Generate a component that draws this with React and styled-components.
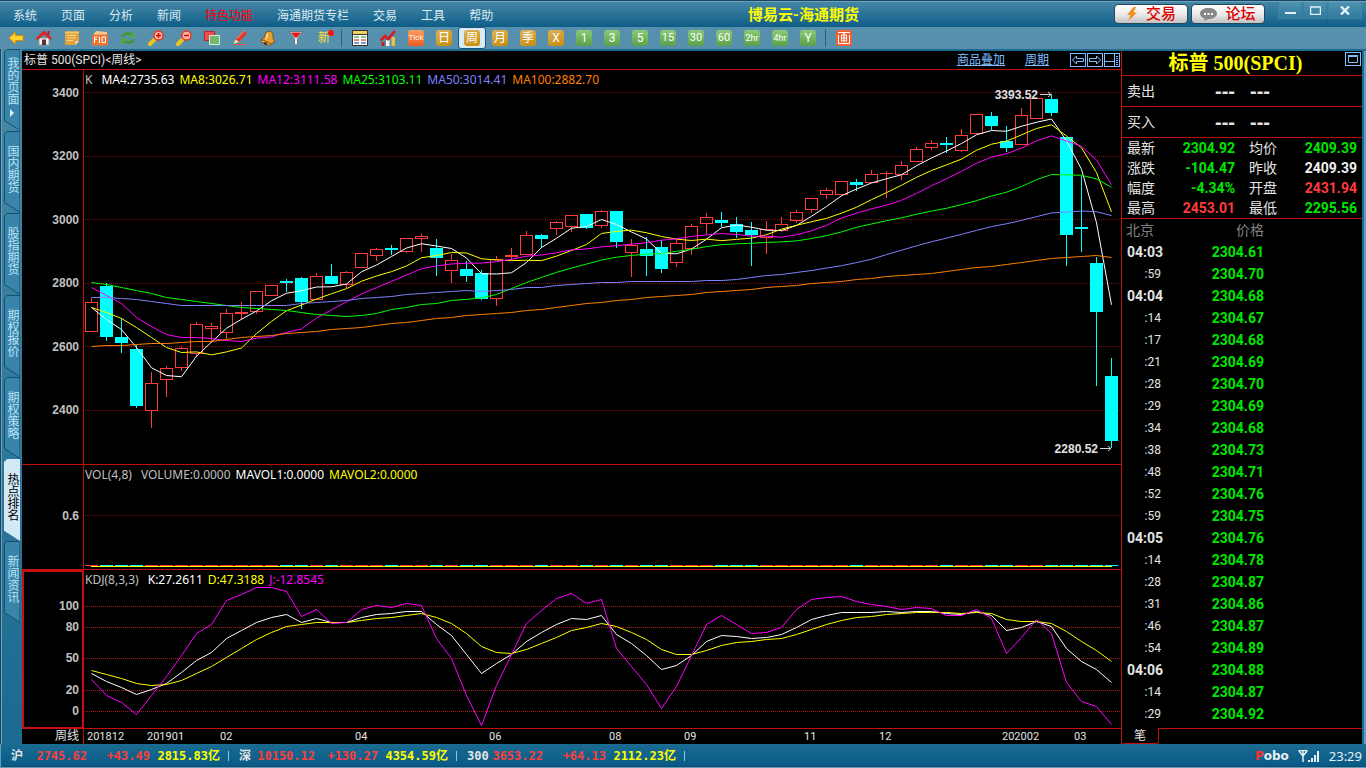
import React, { useState } from "react";
import styled, { createGlobalStyle, css } from "styled-components";

const GlobalStyle = createGlobalStyle`
  * {
    box-sizing: border-box;
  }
  body {
    margin: 0;
    background: #000;
    color: #e4e4e4;
    font: 12px/16px Roboto, "Noto Sans CJK SC", sans-serif;
  }
  button {
    padding: 0;
    border: none;
    background: none;
    color: inherit;
    font: inherit;
    cursor: pointer;
  }
  svg {
    display: block;
  }
`;

const RED = "#c01008";

/* ---------- data ---------- */

const menus = ["系统", "页面", "分析", "新闻", "特色功能", "海通期货专栏", "交易", "工具", "帮助"];

const sideTabs = ["我的页面", "国内期货", "股指期货", "期权报价", "期权策略", "热点排名", "新闻资讯"];

const periods = [
  ["Tick", "orange"],
  ["日", "gold"],
  ["周", "gold"],
  ["月", "gold"],
  ["季", "gold"],
  ["X", "gold"],
  ["1", "green"],
  ["3", "green"],
  ["5", "green"],
  ["15", "green"],
  ["30", "green"],
  ["60", "green"],
  ["2hr", "green"],
  ["4hr", "green"],
  ["Y", "green"],
];

// [high, body top, body bottom, low, rising]
const candles = [
  [298, 302, 332, 332, 1], [283, 286, 337, 341, 0], [318, 337, 343, 353, 0], [345, 349, 406, 408, 0],
  [372, 383, 411, 428, 1], [366, 368, 380, 397, 1], [347, 348, 368, 371, 1], [322, 324, 354, 357, 1],
  [323, 326, 329, 343, 1], [309, 313, 333, 339, 1], [302, 312, 314, 320, 1], [291, 291, 312, 314, 1],
  [285, 285, 296, 296, 1], [279, 281, 283, 292, 0], [277, 278, 302, 309, 0], [273, 276, 300, 300, 1],
  [264, 276, 284, 284, 0], [271, 272, 285, 288, 1], [253, 253, 268, 268, 1], [248, 249, 256, 261, 1],
  [245, 248, 250, 255, 0], [238, 238, 252, 253, 1], [234, 236, 239, 252, 1], [239, 248, 258, 276, 0],
  [254, 260, 271, 283, 1], [261, 269, 276, 282, 0], [270, 273, 299, 300, 0], [256, 259, 299, 306, 1],
  [248, 255, 257, 260, 1], [231, 235, 255, 255, 1], [234, 235, 239, 248, 0], [221, 222, 229, 235, 1],
  [215, 215, 227, 232, 1], [214, 214, 228, 229, 0], [210, 211, 226, 228, 1], [211, 211, 242, 248, 0],
  [239, 245, 253, 277, 1], [237, 249, 256, 276, 0], [240, 247, 269, 273, 0], [238, 243, 263, 267, 1],
  [224, 226, 249, 255, 1], [213, 217, 224, 234, 1], [212, 220, 223, 227, 0], [217, 224, 232, 238, 0],
  [222, 230, 235, 266, 0], [221, 229, 238, 254, 1], [217, 224, 231, 232, 1], [210, 212, 221, 223, 1],
  [198, 198, 210, 213, 1], [188, 190, 195, 199, 1], [181, 181, 195, 195, 1], [179, 182, 185, 191, 0],
  [170, 174, 183, 183, 1], [171, 173, 174, 198, 1], [161, 165, 175, 180, 1], [147, 149, 162, 162, 1],
  [140, 143, 148, 150, 1], [137, 143, 145, 153, 0], [129, 135, 151, 152, 1], [114, 114, 134, 134, 1],
  [112, 116, 126, 130, 0], [126, 141, 148, 152, 0], [108, 115, 145, 145, 1], [98, 98, 119, 119, 1],
  [94, 99, 113, 116, 0], [137, 137, 235, 266, 0], [176, 227, 229, 252, 0], [257, 263, 312, 386, 0],
  [358, 376, 441, 448, 0],
];

// values of each average before the window has enough bars of its own
const ma4Lead = [307, 319, 329];
const ma8Lead = [307, 312, 318, 327, 337, 347, 352];
const ma12Lead = [287, 295, 303, 317, 326, 334, 337, 337, 338, 340, 341];
const ma25Lead = [282, 284, 287, 290, 293, 297, 299, 301, 303, 305, 307, 308, 309, 310, 312, 314, 315, 316, 315, 313, 309, 307, 304, 303];
const ma50Lead = [
  297, 297, 298, 299, 301, 303, 305, 305, 305, 305, 305, 305, 305, 305, 303, 302, 301, 300, 298, 297, 296, 294, 293, 292, 291,
  290, 291, 290, 289, 287, 287, 285, 284, 283, 282, 282, 281, 281, 281, 281, 281, 280, 280, 279, 277, 275, 274, 272, 270,
];
const ma100 = [
  346, 345, 345, 344, 343, 343, 342, 341, 341, 339, 337, 336, 335, 333, 332, 331, 329, 328, 327, 325, 323, 322, 320, 318, 317,
  315, 314, 313, 312, 310, 309, 307, 305, 303, 302, 300, 299, 297, 296, 295, 294, 292, 291, 290, 289, 287, 286, 285, 283, 282,
  281, 279, 278, 276, 275, 274, 273, 271, 269, 267, 266, 264, 262, 260, 258, 257, 256, 255, 257,
];

const kdjK = [
  673, 681, 687, 694, 689, 683, 672, 660, 652, 638, 630, 622, 617, 614, 622, 618, 622, 622, 617, 614, 613, 611, 611, 624, 635,
  654, 673, 663, 654, 641, 632, 624, 618, 619, 615, 634, 643, 655, 669, 665, 655, 641, 635, 636, 638, 637, 634, 627, 619, 615,
  612, 612, 612, 611, 612, 611, 611, 613, 614, 611, 615, 630, 627, 621, 626, 648, 661, 669, 682,
];
const kdjD = [
  670, 674, 678, 683, 685, 684, 680, 673, 666, 657, 648, 639, 632, 626, 624, 622, 622, 622, 620, 618, 617, 615, 613, 617, 623,
  633, 646, 652, 653, 649, 643, 637, 630, 627, 623, 626, 632, 639, 649, 654, 654, 650, 645, 642, 641, 639, 638, 634, 629, 624,
  620, 617, 616, 614, 613, 612, 612, 612, 613, 612, 613, 619, 621, 621, 623, 631, 641, 650, 661,
];
const kdjJ = [
  679, 695, 702, 714, 695, 676, 655, 633, 624, 600, 594, 587, 587, 591, 616, 609, 623, 622, 609, 605, 607, 603, 605, 638, 658,
  695, 725, 685, 654, 623, 610, 598, 593, 603, 599, 648, 666, 684, 708, 686, 655, 624, 615, 624, 633, 632, 627, 609, 599, 597,
  596, 601, 604, 606, 609, 607, 608, 615, 615, 609, 618, 653, 637, 619, 633, 682, 701, 706, 724,
];

// label and the share of the axis up to the next one
const dates = [
  ["201812", 60], ["201901", 73], ["02", 135], ["04", 134], ["06", 120], ["08", 75],
  ["09", 120], ["11", 75], ["12", 123], ["202002", 72], ["03", 47],
];

const quotes = [
  ["最新", "2304.92", "down", "均价", "2409.39", "down"],
  ["涨跌", "-104.47", "down", "昨收", "2409.39", "flat"],
  ["幅度", "-4.34%", "down", "开盘", "2431.94", "up"],
  ["最高", "2453.01", "up", "最低", "2295.56", "down"],
];

const ticks = [
  ["04:03", "2304.61"], [":59", "2304.70"], ["04:04", "2304.68"], [":14", "2304.67"], [":17", "2304.68"],
  [":21", "2304.69"], [":28", "2304.70"], [":29", "2304.69"], [":34", "2304.68"], [":38", "2304.73"],
  [":48", "2304.71"], [":52", "2304.76"], [":59", "2304.75"], ["04:05", "2304.76"], [":14", "2304.78"],
  [":28", "2304.87"], [":31", "2304.86"], [":46", "2304.87"], [":54", "2304.89"], ["04:06", "2304.88"],
  [":14", "2304.87"], [":29", "2304.92"],
];

const indexes = [
  ["沪", "2745.62", "+43.49", "2815.83亿"],
  ["深", "10150.12", "+130.27", "4354.59亿"],
  ["300", "3653.22", "+64.13", "2112.23亿"],
];

const tone = { up: "#ff3c3c", down: "#00e600", flat: "#f0f0f0" };

/* ---------- frame ---------- */

const Window = styled.div`
  display: grid;
  grid-template-rows: 27px 24px 1fr 24px;
  min-height: 100vh;
  background: #1d6c93;
`;

const TopBar = styled.header`
  display: flex;
  align-items: center;
  border-top: 1px solid #1b4560;
  box-shadow: inset 0 1px #6aa3bd;
  background: linear-gradient(#4787a5, #2a7499 50%, #0e5d87);
`;

const Menu = styled.nav`
  display: flex;
  gap: 24px;
  padding: 3px 0 0 13px;
`;

const MenuItem = styled.button`
  color: ${(p) => (p.$hot ? "#ff0000" : "#dbe9f0")};
`;

const AppTitle = styled.h1`
  flex: 1;
  margin: 2px 0 0;
  color: #ffff00;
  font-size: 15px;
  line-height: 20px;
  text-align: center;
`;

const TopActions = styled.div`
  display: flex;
  gap: 3px;
`;

const PillButton = styled.button`
  display: flex;
  align-items: center;
  justify-content: center;
  gap: 8px;
  width: 74px;
  height: 20px;
  border: 1px solid #26485a;
  border-radius: 4px;
  background: linear-gradient(#fff, #ececec 50%, #c2c2c2);
  color: #e00000;
  font-size: 15px;
  font-weight: 500;
`;

const WindowButtons = styled.div`
  display: flex;
  align-self: flex-start;
  gap: 1px;
  margin: 1px 4px 0 13px;
`;

const WindowButton = styled.button`
  display: grid;
  place-items: center;
  width: ${(p) => (p.$wide ? 34 : 24)}px;
  height: 17px;
  border: 1px solid #3d83a3;
  border-top: none;
  background: linear-gradient(#4f92b0, #2f799d);
`;

const Toolbar = styled.div`
  display: flex;
  align-items: flex-start;
  padding-left: 2px;
  border-bottom: 2px solid #1f6a90;
  background: #5690ad;
`;

const ToolButton = styled.button`
  display: grid;
  place-items: center;
  width: 28px;
  height: 22px;
  ${(p) =>
    p.$active &&
    css`
      border: 1px solid #17567a;
      border-radius: 3px;
      background: #d6ebf7;
    `}
`;

const Separator = styled.span`
  width: 8px;
  height: 18px;
  margin-top: 2px;
  background: linear-gradient(90deg, transparent 3px, #2f5f7a 3px, #2f5f7a 4px, transparent 4px);
`;

const badge = {
  orange: "linear-gradient(#f9a060, #ee5a20)",
  gold: "linear-gradient(160deg, #dcb45c, #c98a08)",
  green: "linear-gradient(#8ccb78, #5aa048)",
};

const badgeFont = [12, 12, 11, 9, 8];

const Badge = styled.span`
  width: 16px;
  height: 16px;
  border-radius: 3px;
  background: ${(p) => badge[p.$kind]};
  color: #fff;
  font-size: ${(p) => badgeFont[p.$len]}px;
  line-height: 16px;
  text-align: center;
`;

const NewMark = styled.span`
  position: relative;
  color: #ffe040;
  &::after {
    position: absolute;
    top: 0;
    right: -4px;
    width: 6px;
    height: 6px;
    border-radius: 50%;
    background: #ff1010;
    content: "";
  }
`;

const Workspace = styled.div`
  display: grid;
  grid-template-columns: 22px 1fr 240px;
  padding-right: 2px;
  border-right: 2px solid #5f9dba;
`;

/* ---------- side tabs ---------- */

const SideBar = styled.nav`
  display: flex;
  flex-direction: column;
  padding-left: 3px;
  margin-top: -2px;
  border-left: 1px solid #1b4560;
  box-shadow: inset 1px 0 #6aa3bd;
  background: linear-gradient(#4a89a7, #1b6a91);
`;

const SideTab = styled.button`
  position: relative;
  display: flex;
  align-items: center;
  justify-content: center;
  gap: 4px;
  width: 16px;
  height: 82px;
  padding-bottom: 6px;
  color: ${(p) => (p.$active ? "#000" : "#b9e2f5")};
  line-height: 16px;
  writing-mode: vertical-rl;
`;

const TabShape = styled.svg`
  position: absolute;
  inset: 0;
`;

const TabLabel = styled.span`
  position: relative;
  white-space: nowrap;
`;

/* ---------- charts ---------- */

const ChartArea = styled.main`
  display: grid;
  grid-template-rows: 19px 395fr 105fr 159fr 15px;
  min-width: 0;
  border-right: 1px solid ${RED};
  background: #000;
`;

const ChartHead = styled.div`
  display: flex;
  align-items: center;
  border-bottom: 1px solid ${RED};
`;

const ChartName = styled.h2`
  flex: 1;
  margin: 0;
  padding-left: 2px;
  color: #e4e4e4;
  font-size: 12px;
  font-weight: 400;
`;

const HeadLink = styled.a`
  margin-right: 20px;
  color: #7fbfff;
`;

const HeadIcons = styled.div`
  display: flex;
  gap: 1px;
  padding: 0 1px;
`;

const BoxButton = styled.button`
  display: grid;
  place-items: center;
  width: 16px;
  height: 14px;
  border: 1px solid #7fbfff;
`;

const Panel = styled.section`
  display: grid;
  grid-template-columns: 62px 1fr;
  min-height: 0;
`;

const Axis = styled.div`
  display: grid;
  grid-template-rows: ${(p) => p.$rows};
  padding: ${(p) => p.$pad};
  border-right: 1px solid ${RED};
  border-bottom: 1px solid ${RED};
  color: #c0c0c0;
  font: bold 12px/16px "Liberation Sans", sans-serif;
  text-align: right;
  ${(p) =>
    p.$focus &&
    css`
      outline: 2px solid #c81010;
      outline-offset: -2px;
    `}
`;

const Plot = styled.div`
  position: relative;
  min-width: 0;
  border-bottom: 1px solid ${RED};
`;

const PlotSvg = styled.svg`
  position: absolute;
  inset: 0;
  width: 100%;
  height: 100%;
`;

const Legend = styled.div`
  position: relative;
  display: flex;
  gap: 5px;
  padding-left: 1px;
  font: 12px/20px "Noto Sans", sans-serif;
`;

const LegendItem = styled.span`
  color: ${(p) => p.$color};
  &:first-child {
    margin-right: 4px;
  }
`;

const PriceMark = styled.span`
  position: absolute;
  color: #e0e0e0;
  font: bold 12px/14px "Liberation Sans", sans-serif;
`;

const HighMark = styled(PriceMark)`
  top: 18px;
  right: 8%;
`;

const LowMark = styled(PriceMark)`
  right: 23px;
  bottom: 8px;
`;

const DateRow = styled.div`
  display: grid;
  grid-template-columns: 62px 1fr;
  line-height: 15px;
`;

const PeriodName = styled.span`
  padding-right: 4px;
  border-right: 1px solid ${RED};
  text-align: right;
`;

const DateAxis = styled.div`
  display: grid;
  grid-template-columns: ${dates.map((d) => `${d[1]}fr`).join(" ")};
  padding-left: 3px;
  font-size: 11px;
`;

/* ---------- quote panel ---------- */

const QuotePanel = styled.aside`
  display: flex;
  flex-direction: column;
  background: #000;
  font-size: 14px;
`;

const QuoteTitle = styled.div`
  display: flex;
  align-items: flex-start;
  height: 25px;
  padding: 1px 1px 0 4px;
  border-bottom: 1px solid ${RED};
`;

const QuoteName = styled.h2`
  flex: 1;
  margin: 0;
  color: #ffff00;
  font: bold 20px/22px "Liberation Serif", "Noto Sans CJK SC", serif;
  text-align: center;
`;

const Order = styled.div`
  display: grid;
  grid-template-columns: 88px 35px 1fr;
  align-items: center;
  height: 31px;
  padding-left: 5px;
  border-bottom: 1px solid ${RED};
`;

const OrderValue = styled.span`
  font: bold 20px/20px "Liberation Sans", sans-serif;
`;

const QuoteTable = styled.table`
  width: 100%;
  border-bottom: 1px solid ${RED};
  border-spacing: 0;
  table-layout: fixed;
  th {
    height: 20px;
    padding: 0 0 0 5px;
    font-weight: 400;
    line-height: 20px;
    text-align: left;
  }
  th:nth-child(3) {
    padding-left: 14px;
  }
`;

const QuoteValue = styled.td`
  padding: 0;
  color: ${(p) => tone[p.$tone]};
  font-weight: 700;
  line-height: 20px;
  text-align: right;
  &:last-child {
    padding-right: 5px;
  }
`;

const TickTable = styled.table`
  width: 100%;
  border-spacing: 0;
  th,
  td {
    height: 22px;
    padding: 0;
    line-height: 22px;
    text-align: right;
  }
  th {
    color: #808080;
    font-weight: 400;
  }
  th:first-child {
    padding-right: 9px;
  }
  td:nth-child(2) {
    color: ${tone.down};
    font-weight: 700;
  }
`;

const TickTime = styled.td`
  font-size: ${(p) => (p.$minute ? 14 : 12)}px;
  font-weight: ${(p) => (p.$minute ? 700 : 400)};
  && {
    padding-right: ${(p) => (p.$minute ? 0 : 2)}px;
  }
`;

const PanelFoot = styled.div`
  display: flex;
  height: 16px;
  margin-top: auto;
`;

const FootTab = styled.button`
  width: 37px;
  border: 1px solid ${RED};
  border-top: none;
  border-left: none;
  border-radius: 0 0 3px 3px;
  font-size: 12px;
  line-height: 14px;
`;

const FootLine = styled.span`
  flex: 1;
  border-top: 1px solid ${RED};
`;

/* ---------- status bar ---------- */

const StatusBar = styled.footer`
  display: flex;
  align-items: center;
  padding: 0 4px 0 10px;
  border: solid #5f9dba;
  border-width: 0 0 1px 1px;
  box-shadow: inset 0 -1px #124b6b;
  background: linear-gradient(#1b6b92, #075a86);
`;

const IndexGroup = styled.div`
  display: grid;
  grid-template-columns: 76px 63px 70px 9px;
  padding-right: 10px;
  font: bold 12px/16px "DejaVu Sans Mono", "Noto Sans CJK SC", monospace;
  text-align: right;
  white-space: nowrap;
`;

const IndexName = styled.span`
  display: flex;
  justify-content: space-between;
`;

const IndexText = styled.span`
  color: ${(p) => p.$color};
`;

const Divider = styled.i`
  justify-self: end;
  width: 1px;
  height: 10px;
  margin-top: 3px;
  background: #7fc8ee;
`;

const StatusRight = styled.div`
  display: flex;
  align-items: center;
  gap: 9px;
  margin-left: auto;
  color: #e8f0f4;
`;

const Brand = styled.b`
  display: block;
  font: bold 12px/16px "DejaVu Sans", sans-serif;
  &::first-letter {
    color: #ff3030;
  }
`;

const Clock = styled.time`
  font: 13px/16px "Noto Sans", sans-serif;
`;

/* ---------- icons ---------- */

const toolIcons = [
  ["后退", <path key="a" d="M1 8 7.5 2v3.500H15v5H7.500V14z" fill="#ffd22e" stroke="#d98e00" />],
  [
    "首页",
    <g key="a">
      <path d="M3 8h10v7H3z" fill="#f3f3f3" stroke="#999" />
      <path d="M11.500 1h2v4h-2z" fill="#b01818" />
      <path d="M8 .5 16 8l-1.500 2L8 4.500 1.500 10 0 8z" fill="#e02222" />
      <path d="M6 9.500h4V15H6z" fill="#5a3030" />
    </g>,
  ],
  [
    "便签",
    <g key="a">
      <path d="M1 1.500h14V11l-3.500 4H1z" fill="#e0a03a" />
      <path d="M1 1.500h14v2H1z" fill="#f2c468" />
      <path d="M15 11h-3.500v4z" fill="#ffe2a0" />
      <path d="M3 5.500h9M3 8h9M3 10.500h6" stroke="#fbd88c" />
    </g>,
  ],
  [
    "F10",
    <g key="a">
      <path d="M1 5 4 1l11 1v12.500H1z" fill="#ffc88a" />
      <rect y="4.500" width="16" height="11" rx="1.500" fill="#ee7430" />
      <path d="M2.500 13V7H5.500M2.500 9.500h2.500M7.500 6.500V13M10 7h3.500v5.500H10z" stroke="#fff" fill="none" />
    </g>,
  ],
  [
    "刷新",
    <g key="a" fill="none" stroke="#3f9a20" strokeWidth="2.4">
      <path d="M2 6.500C4 3 9.500 2.500 12 5" />
      <path d="M14 9.500C12 13 6.500 13.500 4 11" />
      <path d="M14.500 1.500v6H8.500zM1.500 14.500v-6h6z" fill="#4fb02c" stroke="none" />
    </g>,
  ],
  ["放大", "plus"],
  ["缩小", "minus"],
  [
    "叠加",
    <g key="a">
      <path d="M.5 1.500h10v9H.5z" fill="#ee5050" stroke="#b82424" />
      <path d="M5.500 5.500h10v9h-10z" fill="#74b870" stroke="#d4ecd0" />
    </g>,
  ],
  [
    "画线",
    <g key="a">
      <path d="m3.500 9.500 8-9L15 3.500 7 12z" fill="#e8382a" />
      <path d="m5 8.500 7.500-8" stroke="#ff9a80" />
      <path d="M3.500 9.500 1.500 14 7 12z" fill="#ffdca0" />
      <path d="M1 14.500h13" stroke="#f05030" />
    </g>,
  ],
  [
    "预警",
    <g key="a">
      <path d="M1.500 9.500C6 8 4 3 7.500 1.500c3.500-1 5.500 1 5.500 4.500s.5 4 2 5.500l-4.500 3z" fill="#e8a030" stroke="#8a4a08" />
      <path d="M8 3.500C6.500 5 7.500 7.500 6 9.500" fill="none" stroke="#ffe090" strokeWidth="1.5" />
      <path d="m1.500 9.500 9.500 4.500-1 1.500-9-4z" fill="#ffd878" stroke="#8a4a08" />
      <circle cx="5.500" cy="13.500" r="1.500" fill="#5a2a08" />
    </g>,
  ],
  [
    "筛选",
    <g key="a">
      <path d="M1.500 1.500h13L9.500 8.500v6.500h-3V8.500z" fill="#e8eef2" stroke="#6c7880" />
      <path d="M3 2.500h10L9 7.500H7z" fill="#e01818" />
    </g>,
  ],
];

function ToolIcon({ shape }) {
  return (
    <svg width="16" height="16" viewBox="0 0 16 16">
      {typeof shape === "string" ? (
        <g>
          <path d="m2 14 4-4" stroke="#f2c21c" strokeWidth="4" strokeLinecap="round" />
          <circle cx="10.500" cy="5.500" r="4.600" fill="#f8b4a8" stroke="#e83820" strokeWidth="1.5" />
          <path d={shape === "plus" ? "M8 5.500h5M10.500 3v5" : "M8 5.500h5"} stroke="#c81000" strokeWidth="1.5" />
        </g>
      ) : (
        shape
      )}
    </svg>
  );
}

const ListIcon = () => (
  <svg width="16" height="16" viewBox="0 0 16 16">
    <path d="M.5.500h15v15H.5z" fill="#fff" stroke="#333" />
    <path d="M1 1h14v3H1z" fill="#f0d060" />
    <path d="M1 4.500h14" stroke="#333" />
    <path d="M2 7h5M9 7h5" stroke="#118a11" />
    <path d="M2 10h5M9 10h5" stroke="#d01010" />
    <path d="M2 13h5M9 13h5" stroke="#1030a0" />
  </svg>
);

const TrendIcon = () => (
  <svg width="16" height="16" viewBox="0 0 16 16">
    <path d="M1.500 12h3v4h-3z" fill="#c02020" />
    <path d="M6 10h3.500v6H6z" fill="#f4f4f4" />
    <path d="M11.500 7H15v9h-3.500z" fill="#f0c040" />
    <path d="M.5 10.500 5 6l3 3 7-8" fill="none" stroke="#e01818" strokeWidth="2.6" />
  </svg>
);

const DrawIcon = () => (
  <svg width="16" height="16" viewBox="0 0 16 16">
    <rect width="16" height="16" rx="2" fill="#f06030" />
    <path d="M2 2.500h12M2.500 5v8.500h11V5M5.500 5h5v6h-5zM5.500 8h5M8 3v8" fill="none" stroke="#fff" />
  </svg>
);

/* ---------- pieces ---------- */

const xOf = (i) => 91.5 + i * 15;
const closes = candles.map(([, top, bottom, , up]) => (up ? top : bottom));

const average = (n, lead) =>
  closes.map((_, i) => (i < n - 1 ? lead[i] : closes.slice(i - n + 1, i + 1).reduce((a, b) => a + b, 0) / n));

const Line = ({ values, color }) => (
  <polyline points={values.map((v, i) => `${xOf(i)},${v + 0.5}`).join(" ")} fill="none" stroke={color} />
);

const GridLines = ({ rows, color }) =>
  rows.map((y) => (
    <path key={y} d={`M85 ${y + 0.5}H1121`} stroke={color} strokeDasharray="1 1" shapeRendering="crispEdges" />
  ));

function Candle({ i, bar }) {
  const [high, top, bottom, low, up] = bar;
  const x = 91 + i * 15;
  if (!up) {
    return (
      <g fill="#00ffff" shapeRendering="crispEdges">
        <rect x={x} y={high} width="1" height={low - high} />
        <rect x={x - 6} y={top} width="13" height={bottom - top} />
      </g>
    );
  }
  return (
    <g stroke="#ff3c3c" fill="none" shapeRendering="crispEdges">
      <path d={`M${x + 0.5} ${high}V${top}M${x + 0.5} ${bottom}V${low}`} />
      <rect x={x - 5.5} y={top + 0.5} width="12" height={Math.max(bottom - top - 1, 0.1)} />
    </g>
  );
}

function KChart() {
  return (
    <Panel>
      <Axis $rows="repeat(5, 1fr) 16px" $pad="15px 4px 46px 0">
        {[3400, 3200, 3000, 2800, 2600, 2400].map((v) => (
          <span key={v}>{v}</span>
        ))}
      </Axis>
      <Plot>
        <PlotSvg viewBox="84 70 1037 394" preserveAspectRatio="none">
          <GridLines rows={[92, 156, 219, 283, 346, 410]} color="#7c1010" />
          {candles.map((bar, i) => (
            <Candle key={i} i={i} bar={bar} />
          ))}
          <Line values={average(4, ma4Lead)} color="#ffffff" />
          <Line values={average(8, ma8Lead)} color="#ffff00" />
          <Line values={average(12, ma12Lead)} color="#ff00ff" />
          <Line values={average(25, ma25Lead)} color="#00ff00" />
          <Line values={average(50, ma50Lead)} color="#8080ff" />
          <Line values={ma100} color="#ff8000" />
          <path d="M1040 94.500h11M1048 92l3 2.500-3 2.500M1100 448.500h11M1108 446l3 2.500-3 2.500" stroke="#d0d0d0" fill="none" />
        </PlotSvg>
        <Legend>
          <LegendItem $color="#c0c0c0">K</LegendItem>
          <LegendItem $color="#ffffff">MA4:2735.63</LegendItem>
          <LegendItem $color="#ffff00">MA8:3026.71</LegendItem>
          <LegendItem $color="#ff00ff">MA12:3111.58</LegendItem>
          <LegendItem $color="#00ff00">MA25:3103.11</LegendItem>
          <LegendItem $color="#8080ff">MA50:3014.41</LegendItem>
          <LegendItem $color="#ff8000">MA100:2882.70</LegendItem>
        </Legend>
        <HighMark>3393.52</HighMark>
        <LowMark>2280.52</LowMark>
      </Plot>
    </Panel>
  );
}

function VolChart() {
  return (
    <Panel>
      <Axis $rows="16px" $pad="43px 4px 0 0">
        <span>0.6</span>
      </Axis>
      <Plot>
        <PlotSvg viewBox="84 465 1037 104" preserveAspectRatio="none" shapeRendering="crispEdges">
          <GridLines rows={[515]} color="#7c1010" />
          {candles.map((bar, i) => (
            <rect key={i} x={85 + i * 15} y="565" width="13" height="1" fill={bar[4] ? "#ff3c3c" : "#00ffff"} />
          ))}
          <rect x="91" y="566" width="1021" height="1" fill="#ffff00" />
        </PlotSvg>
        <Legend>
          <LegendItem $color="#c0c0c0">VOL(4,8)</LegendItem>
          <LegendItem $color="#c0c0c0">VOLUME:0.0000</LegendItem>
          <LegendItem $color="#ffffff">MAVOL1:0.0000</LegendItem>
          <LegendItem $color="#ffff00">MAVOL2:0.0000</LegendItem>
        </Legend>
      </Plot>
    </Panel>
  );
}

function KdjChart() {
  return (
    <Panel>
      <Axis $rows="20fr 30fr 30fr 20fr 16px" $pad="28px 4px 9px 0" $focus>
        {[100, 80, 50, 20, 0].map((v) => (
          <span key={v}>{v}</span>
        ))}
      </Axis>
      <Plot>
        <PlotSvg viewBox="84 570 1037 158" preserveAspectRatio="none">
          <GridLines rows={[606, 627, 658, 690, 711]} color="#a81810" />
          <Line values={kdjK} color="#ffffff" />
          <Line values={kdjD} color="#ffff00" />
          <Line values={kdjJ} color="#ff00ff" />
        </PlotSvg>
        <Legend>
          <LegendItem $color="#c0c0c0">KDJ(8,3,3)</LegendItem>
          <LegendItem $color="#ffffff">K:27.2611</LegendItem>
          <LegendItem $color="#ffff00">D:47.3188</LegendItem>
          <LegendItem $color="#ff00ff">J:-12.8545</LegendItem>
        </Legend>
      </Plot>
    </Panel>
  );
}

function Quotes() {
  return (
    <QuotePanel>
      <QuoteTitle>
        <QuoteName>标普 500(SPCI)</QuoteName>
        <BoxButton aria-label="最大化">
          <svg width="10" height="8" viewBox="0 0 10 8">
            <path d="M.5 1.500h9v6h-9zM0 .5h10" fill="none" stroke="#7fbfff" />
          </svg>
        </BoxButton>
      </QuoteTitle>
      {["卖出", "买入"].map((name) => (
        <Order key={name}>
          <span>{name}</span>
          <OrderValue>---</OrderValue>
          <OrderValue>---</OrderValue>
        </Order>
      ))}
      <QuoteTable>
        <colgroup>
          <col width="41" />
          <col width="72" />
          <col width="45" />
          <col />
        </colgroup>
        <tbody>
          {quotes.map(([a, av, at, b, bv, bt]) => (
            <tr key={a}>
              <th scope="row">{a}</th>
              <QuoteValue $tone={at}>{av}</QuoteValue>
              <th scope="row">{b}</th>
              <QuoteValue $tone={bt}>{bv}</QuoteValue>
            </tr>
          ))}
        </tbody>
      </QuoteTable>
      <TickTable>
        <colgroup>
          <col width="41" />
          <col width="101" />
          <col />
        </colgroup>
        <thead>
          <tr>
            <th>北京</th>
            <th>价格</th>
            <th />
          </tr>
        </thead>
        <tbody>
          {ticks.map(([time, price], i) => (
            <tr key={i}>
              <TickTime $minute={time.length > 3}>{time}</TickTime>
              <td>{price}</td>
              <td />
            </tr>
          ))}
        </tbody>
      </TickTable>
      <PanelFoot>
        <FootTab>笔</FootTab>
        <FootLine />
      </PanelFoot>
    </QuotePanel>
  );
}

function App() {
  const [period, setPeriod] = useState("周");
  const [tab, setTab] = useState("热点排名");

  return (
    <>
      <GlobalStyle />
      <Window>
        <TopBar>
          <Menu>
            {menus.map((m) => (
              <MenuItem key={m} $hot={m === "特色功能"}>
                {m}
              </MenuItem>
            ))}
          </Menu>
          <AppTitle>博易云-海通期货</AppTitle>
          <TopActions>
            <PillButton>
              <svg width="12" height="14" viewBox="0 0 12 14">
                <path d="M7.500 0 1 8h3.500L2.500 14 11 5.500H7.500L10 0z" fill="#f09020" />
              </svg>
              交易
            </PillButton>
            <PillButton>
              <svg width="17" height="13" viewBox="0 0 17 13">
                <path d="M8.500 0C13 0 17 2 17 5.500S13 11 8.500 11L4 13l.5-2.500C2 9.500 0 8 0 5.500 0 2 4 0 8.500 0z" fill="#888" />
                <path d="M4 5h2v2H4zM7.500 5h2v2h-2zM11 5h2v2h-2z" fill="#fff" />
              </svg>
              论坛
            </PillButton>
          </TopActions>
          <WindowButtons>
            <WindowButton aria-label="最小化">
              <svg width="11" height="10" viewBox="0 0 11 10">
                <path d="M0 8h11" stroke="#e4f0f6" strokeWidth="2" />
              </svg>
            </WindowButton>
            <WindowButton aria-label="最大化">
              <svg width="11" height="9" viewBox="0 0 11 9">
                <path d="M.5 1h10v7.500H.5zM0 1h11" fill="none" stroke="#e4f0f6" strokeWidth="1.5" />
              </svg>
            </WindowButton>
            <WindowButton $wide aria-label="关闭">
              <svg width="10" height="9" viewBox="0 0 10 9">
                <path d="m1 .5 8 8M9 .5l-8 8" stroke="#e4f0f6" strokeWidth="2.4" />
              </svg>
            </WindowButton>
          </WindowButtons>
        </TopBar>

        <Toolbar>
          {toolIcons.map(([name, shape]) => (
            <ToolButton key={name} aria-label={name}>
              <ToolIcon shape={shape} />
            </ToolButton>
          ))}
          <ToolButton>
            <NewMark>新</NewMark>
          </ToolButton>
          <Separator />
          <ToolButton aria-label="报价">
            <ListIcon />
          </ToolButton>
          <ToolButton aria-label="走势">
            <TrendIcon />
          </ToolButton>
          {periods.map(([name, kind]) => (
            <ToolButton key={name} $active={name === period} onClick={() => setPeriod(name)}>
              <Badge $kind={kind} $len={name.length}>
                {name}
              </Badge>
            </ToolButton>
          ))}
          <Separator />
          <ToolButton aria-label="画图">
            <DrawIcon />
          </ToolButton>
        </Toolbar>

        <Workspace>
          <SideBar>
            {sideTabs.map((name, i) => (
              <SideTab key={name} $active={name === tab} onClick={() => setTab(name)}>
                <TabShape width="16" height="82" viewBox="0 0 16 82">
                  <path
                    d="M16 .5H3L.5 3v68.500L16 81.500z"
                    fill={name === tab ? "#d3e9f6" : "#3a84aa"}
                    stroke={name === tab ? "#d3e9f6" : "#11506f"}
                  />
                </TabShape>
                <TabLabel>{name}</TabLabel>
                {i === 0 && (
                  <TabLabel as="svg" width="4" height="8" viewBox="0 0 4 8">
                    <path d="M0 0l4 4-4 4z" fill="#d8f0fc" />
                  </TabLabel>
                )}
              </SideTab>
            ))}
          </SideBar>

          <ChartArea>
            <ChartHead>
              <ChartName>标普 500(SPCI)&lt;周线&gt;</ChartName>
              <HeadLink href="#overlay">商品叠加</HeadLink>
              <HeadLink href="#period">周期</HeadLink>
              <HeadIcons>
                <BoxButton aria-label="左移">
                  <svg width="12" height="10" viewBox="0 0 12 10">
                    <path d="m.5 5 4-4v2.500h7v3h-7V9z" fill="none" stroke="#7fbfff" />
                  </svg>
                </BoxButton>
                <BoxButton aria-label="右移">
                  <svg width="12" height="10" viewBox="0 0 12 10">
                    <path d="m11.500 5-4-4v2.500h-7v3h7V9z" fill="none" stroke="#7fbfff" />
                  </svg>
                </BoxButton>
                <BoxButton aria-label="侧栏">
                  <svg width="14" height="12" viewBox="0 0 14 12">
                    <path d="M9.500 0v12M0 7.500h9M11 2.500h2M11 4.500h2M11 6.500h2M11 8.500h2M11 10.500h2" stroke="#7fbfff" />
                  </svg>
                </BoxButton>
              </HeadIcons>
            </ChartHead>
            <KChart />
            <VolChart />
            <KdjChart />
            <DateRow>
              <PeriodName>周线</PeriodName>
              <DateAxis>
                {dates.map(([d]) => (
                  <span key={d}>{d}</span>
                ))}
              </DateAxis>
            </DateRow>
          </ChartArea>

          <Quotes />
        </Workspace>

        <StatusBar>
          {indexes.map(([name, value, change, amount]) => (
            <IndexGroup key={name}>
              <IndexName>
                {name}
                <IndexText $color="#ff3c3c">{value}</IndexText>
              </IndexName>
              <IndexText $color="#ff3c3c">{change}</IndexText>
              <IndexText $color="#ffff00">{amount}</IndexText>
              <Divider />
            </IndexGroup>
          ))}
          <StatusRight>
            <Brand>Pobo</Brand>
            <svg width="22" height="12" viewBox="0 0 22 12">
              <path d="M.5.500h9M1 1l4 5 4-5M5 1v11" fill="none" stroke="#e8f0f4" strokeWidth="1.5" />
              <path d="M10 10h2v2h-2zM13 8h2v4h-2zM16 5h2v7h-2zM19 1h2v11h-2z" fill="#e8f0f4" />
            </svg>
            <Clock>23:29</Clock>
          </StatusRight>
        </StatusBar>
      </Window>
    </>
  );
}

export default App;
